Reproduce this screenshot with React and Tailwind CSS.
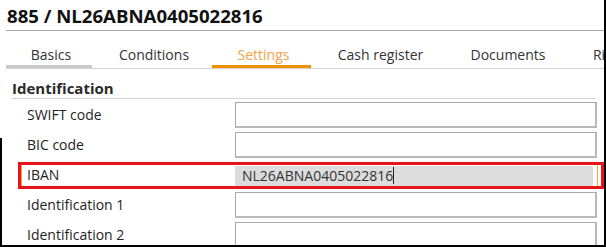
import React from 'react';

const tabs = [
  { label: 'Basics', w: 'w-[86px]' },
  { label: 'Conditions', w: 'w-[120px]' },
  { label: 'Settings', w: 'w-[99px]' },
  { label: 'Cash register', w: 'w-[135px]' },
  { label: 'Documents', w: 'w-[120px]' },
  { label: 'Risk', w: 'w-[76px]' },
];

const fields = [
  { id: 'swift', label: 'SWIFT code', value: '' },
  { id: 'bic', label: 'BIC code', value: '' },
  { id: 'iban', label: 'IBAN', value: 'NL26ABNA0405022816', highlight: true },
  { id: 'id1', label: 'Identification 1', value: '' },
  { id: 'id2', label: 'Identification 2', value: '' },
];

const App = () => {
  return (
    <div
      className="relative w-[606px] h-[247px] overflow-hidden bg-white border-r-2 border-b-2 border-black"
      style={{ fontFamily: '"Open Sans", "Noto Sans", sans-serif' }}
    >
      {/* frame edge on the left, lower part only */}
      <div className="absolute left-0 top-[138px] bottom-0 w-[1.5px] bg-black" />

      {/* Title */}
      <div className="ml-[6px] h-[31px] pl-[1px] flex items-center border-b border-[#a6a6a6]">
        <h1 className="text-[18.6px] leading-[22px] font-bold text-[#111] mt-[2px]">885 / NL26ABNA0405022816</h1>
      </div>

      {/* Tabs */}
      <div className="ml-[6px] h-[38px] flex items-end border-b border-[#d4d4d4] whitespace-nowrap">
        {tabs.map((tab, i) => (
          <div
            key={tab.label}
            className={`${tab.w} shrink-0 pl-[4px] text-center text-[14px] leading-[20px] border-b-[3px] ${
              i === 0
                ? 'border-[#c9c9c9] text-[#333]'
                : i === 2
                ? 'border-[#f39200] text-[#f5a445]'
                : 'border-transparent text-[#333]'
            }`}
          >
            {tab.label}
          </div>
        ))}
      </div>

      {/* Identification section */}
      <div className="ml-[11px] mr-[8px] mt-[9px] h-[21px] border-b border-[#d6d6d6]">
        <h2 className="text-[15px] leading-[20px] font-bold text-[#2a2a2a] pl-[1px]">Identification</h2>
      </div>

      <div className="mt-[3px] flex flex-col gap-[4px] pl-[27px]">
        {fields.map((f) => (
          <div key={f.id} className="relative flex items-center h-[26px]">
            {f.highlight && (
              <div className="absolute left-[-9px] top-0 w-[586px] h-[27px] border-[3px] border-[#e8141b] pointer-events-none z-10">
                <div className="absolute left-0 top-0 bottom-0 w-[1px] bg-[#f5a445]" />
                <div className="absolute right-[3px] top-0 bottom-0 w-[1px] bg-[#f5a445]" />
              </div>
            )}
            <label className="w-[208px] text-[14px] leading-[20px] text-[#1e1e1e]">{f.label}</label>
            {f.highlight ? (
              <div className="w-[358px] h-[20px] mt-[1px] bg-[#dcdcdc] flex items-center pl-[7px] text-[14px] text-[#333]">
                <span>{f.value}</span>
                <span className="w-[1px] h-[17px] bg-[#222]" />
              </div>
            ) : (
              <div className="w-[362px] h-[26px] border border-[#a9a9a9] border-r-2 border-b-2 border-r-[#b9b9b9] border-b-[#b9b9b9] bg-white" />
            )}
          </div>
        ))}
      </div>
    </div>
  );
};

export default App;
